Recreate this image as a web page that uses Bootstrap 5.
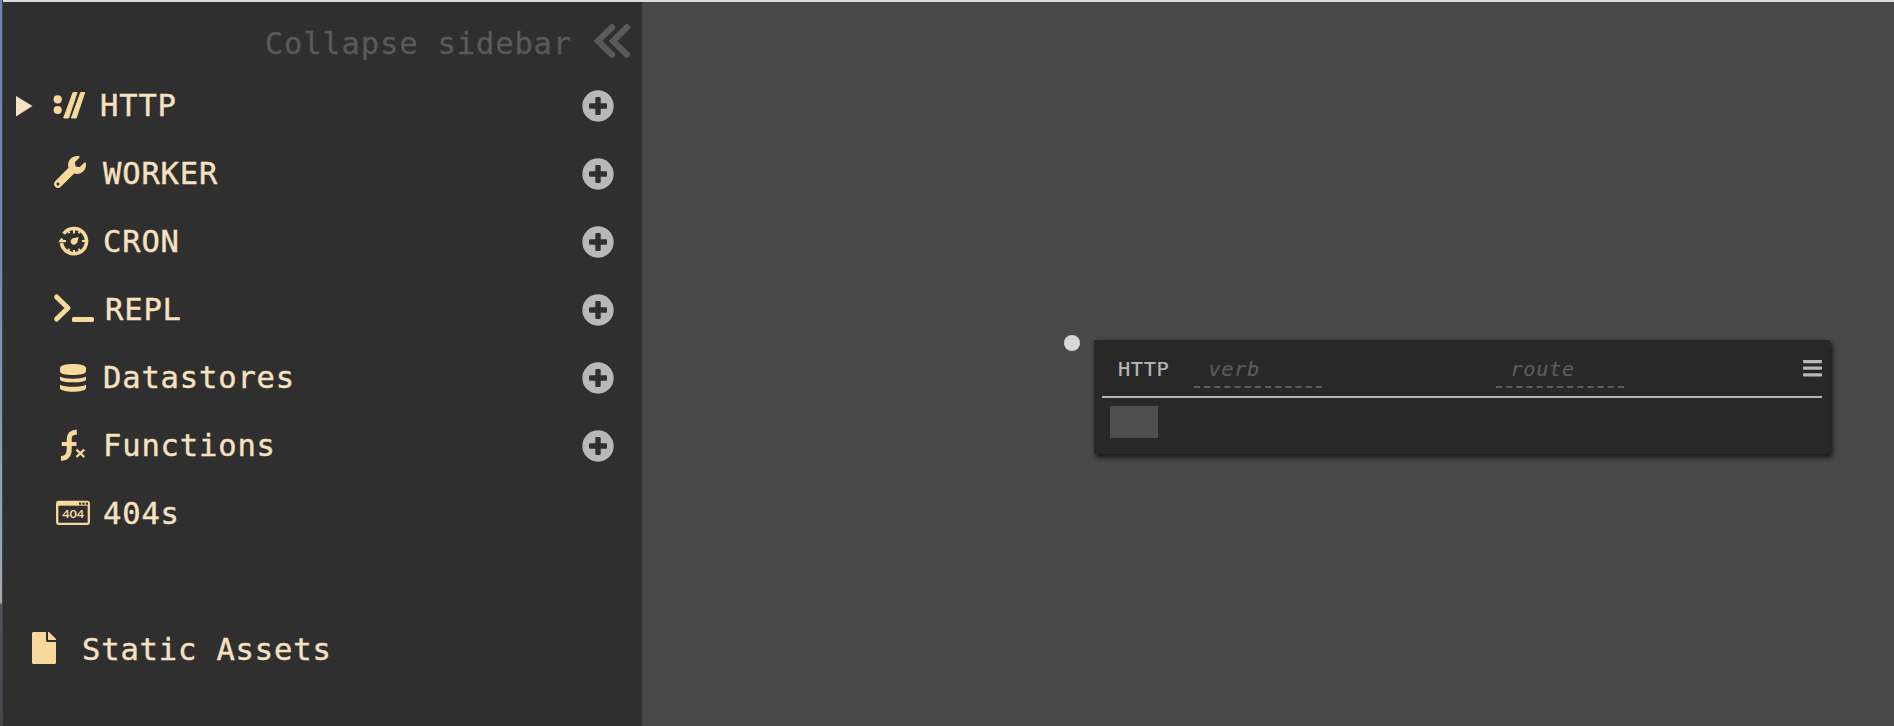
<!DOCTYPE html>
<html lang="en">
<head>
<meta charset="utf-8">
<title>Canvas</title>
<link href="https://cdn.jsdelivr.net/npm/bootstrap@5.3.0/dist/css/bootstrap.min.css" rel="stylesheet">
<style>
body{background:#484848;color:#f7e1c1;font-family:"DejaVu Sans Mono",monospace;font-size:30.5px;letter-spacing:.84px;line-height:68px;height:726px;overflow:hidden}
.app-shell{height:726px}
.desktop-edge{width:3px;border-right:1px solid #414346;background:linear-gradient(#6f86ad 0,#7489ac 260px,#9ba7b2 560px,#a6aaae 602px,#55525e 605px,#44464e 100%)}
.side-panel{width:639px;background:#2f2f2f;border-top:2px solid #d9dae2}
.work-canvas{border-top:2px solid #d9dae2}
.side-row{height:68px;white-space:pre}
.side-row svg,.collapse-row svg{display:block;flex:none;overflow:visible}
.side-row span{padding-left:1px;-webkit-text-stroke:.4px}
.collapse-row{height:70px;color:#5a5a5a;line-height:83px;-webkit-text-stroke:.3px}
.glyphs{fill:#f7da9b}
.add-btn{fill:#b8b8b8;margin-right:28px}
.assets-row{margin-bottom:42px}
.handler-node{left:452px;top:338px;width:736px;height:114px;background:#282828;box-shadow:2px 3px 5px #000b;padding:0 8px}
.node-head{height:58px;border-bottom:2px solid #b8b8b8;font-size:20.3px;letter-spacing:.65px;line-height:59px;color:#b8b8b8}
.node-kind{width:92px;padding-left:16px;-webkit-text-stroke:.2px}
.blank-field{width:128px;height:48px;border-bottom:2px dashed #5c5c5c;color:#5c5c5c;font-style:italic;padding-left:14.5px;margin-right:174px;-webkit-text-stroke:.2px}
.body-blank{width:48px;height:32px;background:#4e4e4e;margin:8px 0 0 8px}
.entry-dot{left:422px;top:333px;width:16px;height:16px;background:#d8d8d8}
</style>
<script src="https://cdn.jsdelivr.net/npm/bootstrap@5.3.0/dist/js/bootstrap.bundle.min.js"></script>
</head>
<body>
<svg width="0" height="0" class="position-absolute">
  <symbol id="plus" viewBox="-16 -16 32 32"><path fill-rule="evenodd" d="M0-15.7A15.7 15.7 0 1 1 0 15.7A15.7 15.7 0 1 1 0-15.7ZM-1.5-9Q-2.7-9-2.7-7.8V-2.7H-7.8Q-9-2.7-9-1.5V1.5Q-9 2.7-7.8 2.7H-2.7V7.8Q-2.7 9-1.5 9H1.5Q2.7 9 2.7 7.8V2.7H7.8Q9 2.7 9 1.5V-1.5Q9-2.7 7.8-2.7H2.7V-7.8Q2.7-9 1.5-9Z"/></symbol>
</svg>
<div class="app-shell d-flex">
  <div class="desktop-edge"></div>
  <nav class="side-panel d-flex flex-column">
    <div class="collapse-row d-flex justify-content-end">
      <span>Collapse sidebar</span>
      <svg width="70" height="66" viewBox="572 2 70 66" fill="none" stroke="#5a5a5a" stroke-width="6.2" stroke-linejoin="miter" stroke-linecap="round"><path d="M612 27.300 598 41 612 54.700M627 27.300 613 41 627 54.700"/></svg>
    </div>
    <div class="side-row d-flex align-items-center">
      <svg class="glyphs" width="96" height="40" viewBox="3 -20 96 40"><path fill="#f7e1c1" d="M16-10 32.5 0 16 10.5Z"/><circle cx="57.7" cy="-6.6" r="4.1"/><circle cx="57.7" cy="4" r="4.1"/><path stroke="#f7da9b" stroke-linejoin="round" d="M73-13.5H77L68.5 12H63.7ZM80.7-13.5H84.7L76.2 12H71.4Z"/></svg>
      <span>HTTP</span>
      <svg class="add-btn ms-auto" width="32" height="32"><use href="#plus"/></svg>
    </div>
    <div class="side-row d-flex align-items-center">
      <svg class="glyphs" width="99" height="40" viewBox="3 -20 99 40"><path transform="translate(54 -18) scale(.0625)" d="M507.73 109.1c-2.24-9.03-13.54-12.09-20.12-5.51l-74.36 74.36-67.88-11.31-11.31-67.88 74.36-74.36c6.62-6.62 3.43-17.9-5.66-20.16-47.38-11.74-99.55.91-136.58 37.93-39.64 39.64-50.55 97.1-34.05 147.2L18.74 402.76c-24.99 24.99-24.99 65.51 0 90.5 24.99 24.99 65.51 24.99 90.5 0l213.21-213.21c50.12 16.71 107.47 5.68 147.37-34.22 37.07-37.07 49.7-89.32 37.91-136.73zM64 472c-13.25 0-24-10.75-24-24 0-13.26 10.75-24 24-24s24 10.74 24 24c0 13.25-10.75 24-24 24z"/></svg>
      <span>WORKER</span>
      <svg class="add-btn ms-auto" width="32" height="32"><use href="#plus"/></svg>
    </div>
    <div class="side-row d-flex align-items-center">
      <svg class="glyphs" width="99" height="40" viewBox="3 -20 99 40"><g fill="none" stroke="#f7da9b"><path stroke-width="3.6" d="M63.7-8.2A12.6 12.6 0 1 1 61.5 1"/><path stroke-width="2" d="M74-12V-8.500M74 8V11M86-1H82M66-1H62M80-11.400 78.700-8.700M68-11.400 69.300-8.700M80 9.400 78.700 6.700M68 9.400 69.300 6.700"/></g><path d="M58.200.3 61.500-4.200 65.800.3ZM72.400-3.600 78.600-5 77.200 1Z"/><circle cx="73.8" cy="-.4" r="3.1"/></svg>
      <span>CRON</span>
      <svg class="add-btn ms-auto" width="32" height="32"><use href="#plus"/></svg>
    </div>
    <div class="side-row d-flex align-items-center">
      <svg class="glyphs" width="101" height="40" viewBox="3 -20 101 40"><path fill="none" stroke="#f7da9b" stroke-width="5" stroke-linecap="round" stroke-linejoin="round" d="M56.6-13 68-2 56.6 9"/><rect x="72" y="7" width="22" height="5" rx="1.6"/></svg>
      <span>REPL</span>
      <svg class="add-btn ms-auto" width="32" height="32"><use href="#plus"/></svg>
    </div>
    <div class="side-row d-flex align-items-center">
      <svg class="glyphs" width="99" height="40" viewBox="3 -20 99 40"><path d="M60-10C60-15.3 86-15.3 86-10V-6.500C86-1.700 60-1.700 60-6.500ZM60-1.200C65 1.400 81 1.400 86-1.200V1.500C86 5.300 60 5.300 60 1.500ZM60 6.700C65 9.400 81 9.400 86 6.700V10.200C86 14.800 60 14.800 60 10.200Z"/></svg>
      <span>Datastores</span>
      <svg class="add-btn ms-auto" width="32" height="32"><use href="#plus"/></svg>
    </div>
    <div class="side-row d-flex align-items-center">
      <svg class="glyphs" width="99" height="40" viewBox="3 -20 99 40"><g fill="none" stroke="#f7da9b"><path stroke-width="5" d="M76.800-14C71.500-13.500 69.200-12 69.200-7V3C69.200 9 67 12 61 12.400"/><path stroke-width="4" d="M61.800-2H76.500"/><path stroke-width="2.300" d="M76.400 3.600 84.200 11M84.200 3.600 76.400 11"/></g></svg>
      <span>Functions</span>
      <svg class="add-btn ms-auto" width="32" height="32"><use href="#plus"/></svg>
    </div>
    <div class="side-row d-flex align-items-center">
      <svg class="glyphs" width="99" height="40" viewBox="3 -20 99 40"><rect x="57.2" y="-12" width="31.6" height="21.8" rx="1.3" fill="none" stroke="#f7da9b" stroke-width="2.3"/><path d="M57-12H89V-8.3H57Z"/><path fill="#2f2f2f" d="M79-11.500h2.200v2.200H79zM82.400-11.500h2.200v2.200h-2.200zM85.800-11.500H88v2.200h-2.200z"/><text x="62.2" y="3.800" font-family="Lato, sans-serif" font-size="11.8" font-weight="700" letter-spacing="0" textLength="22" lengthAdjust="spacingAndGlyphs">404</text></svg>
      <span>404s</span>
    </div>
    <div class="side-row assets-row d-flex align-items-center mt-auto">
      <svg class="glyphs" width="78" height="40" viewBox="3 -20 78 40"><path transform="translate(32 -18) scale(.0625)" d="M224 136V0H24C10.700 0 0 10.700 0 24v464c0 13.300 10.700 24 24 24h336c13.300 0 24-10.700 24-24V160H248c-13.200 0-24-10.800-24-24zm160-14.100v6.100H256V0h6.100c6.400 0 12.500 2.500 17 7l97.900 98c4.500 4.500 7 10.600 7 16.900z"/></svg>
      <span>Static Assets</span>
    </div>
  </nav>
  <main class="work-canvas flex-fill position-relative">
    <div class="entry-dot rounded-circle position-absolute"></div>
    <section class="handler-node position-absolute">
      <div class="node-head d-flex">
        <span class="node-kind">HTTP</span>
        <span class="blank-field">verb</span>
        <span class="blank-field me-auto">route</span>
        <svg width="19" height="40" fill="#b8b8b8"><rect y="20" width="19" height="3.2" rx=".8"/><rect y="26.500" width="19" height="3.200" rx=".8"/><rect y="33.200" width="19" height="3.200" rx=".8"/></svg>
      </div>
      <div class="body-blank"></div>
    </section>
  </main>
</div>
</body>
</html>
